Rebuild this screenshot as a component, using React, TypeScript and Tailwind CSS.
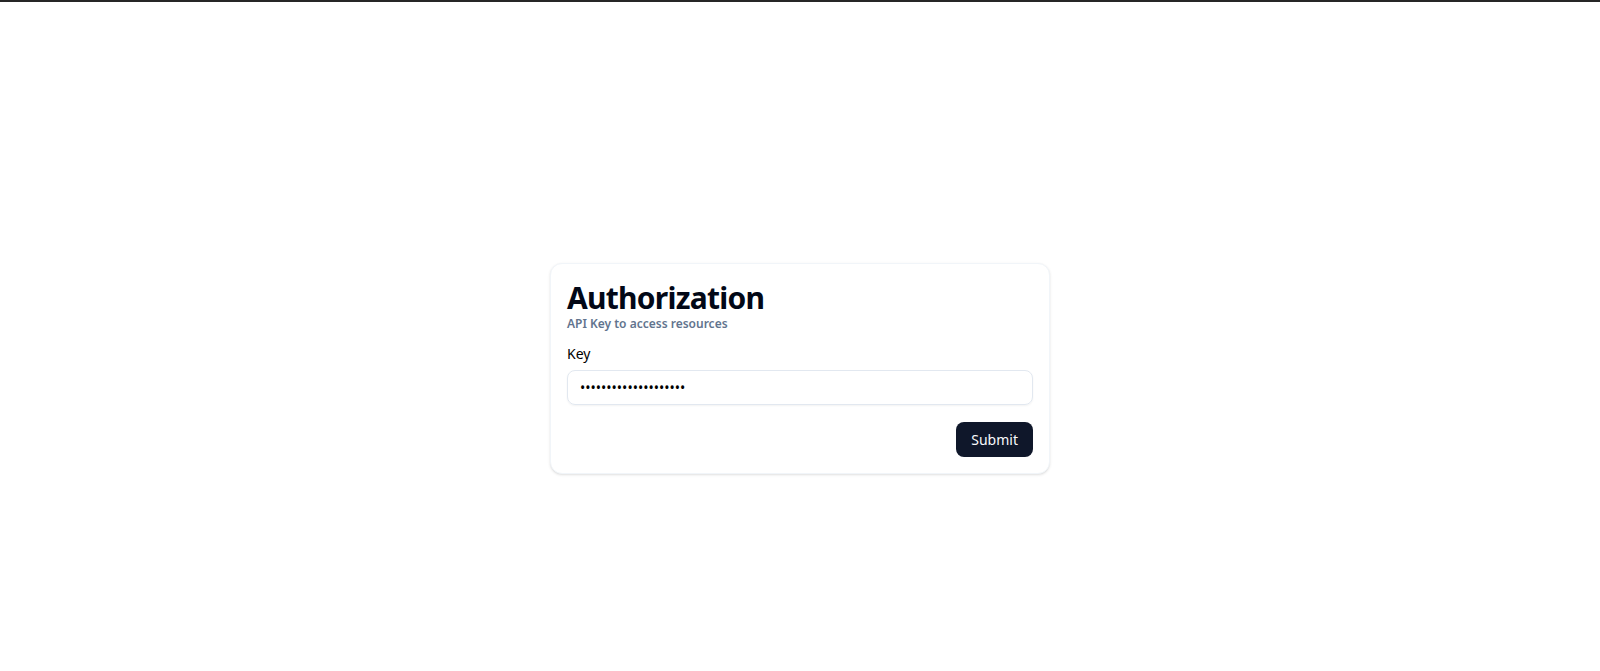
import React from 'react';

const font = { fontFamily: '"Noto Sans", "Open Sans", sans-serif' };

export default function App() {
  return (
    <div
      className="min-h-[671px] w-full bg-white border-t-2 border-[#262626] flex justify-center pt-[261px]"
      style={font}
    >
      <div className="w-[500px] h-fit rounded-xl border border-slate-100 bg-white p-4 shadow-sm">
        <h1 className="text-[30px] font-bold leading-9 tracking-tight text-[#020817]">
          Authorization
        </h1>
        <p className="text-xs font-semibold text-slate-500">
          API Key to access resources
        </p>
        <label className="block mt-3 text-sm text-black">Key</label>
        <input
          type="password"
          defaultValue="aaaaaaaaaaaaaaaaaaaa"
          className="mt-1.5 h-[35px] w-full rounded-lg border border-slate-200 px-3 text-sm outline-none shadow-xs"
          style={font}
        />
        <div className="mt-[17px] flex justify-end">
          <button className="h-[35px] rounded-lg bg-[#0f172a] px-[15px] text-sm text-slate-50">
            Submit
          </button>
        </div>
      </div>
    </div>
  );
}
